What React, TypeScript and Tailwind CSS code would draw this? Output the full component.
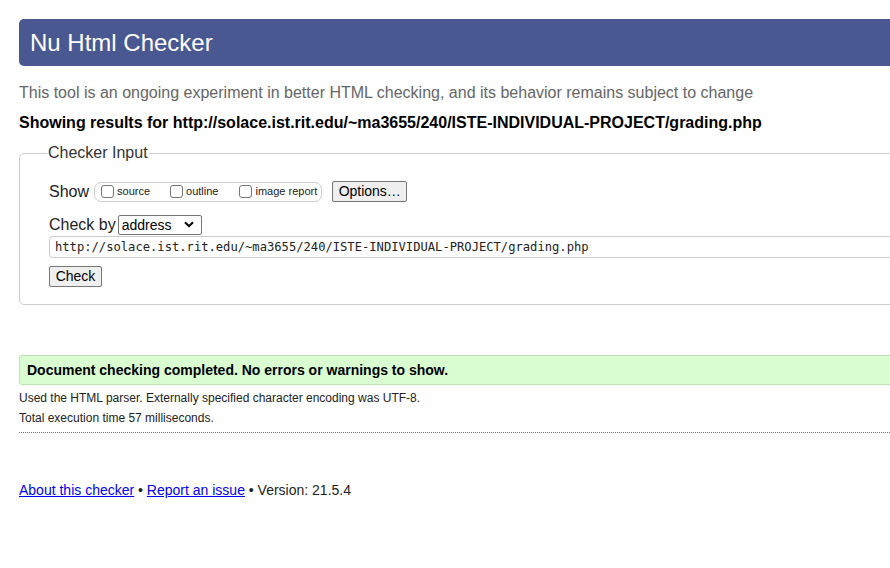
import React from "react";

function Box({ label, className = "" }: { label: string; className?: string }) {
  return (
    <span className={"flex items-center " + className}>
      <span className="inline-block w-[13px] h-[13px] border border-[#767676] rounded-[3px] bg-white" />
      <span className="ml-[3px] text-[11px] leading-[13px] text-[#222]">{label}</span>
    </span>
  );
}

export default function App() {
  return (
    <div className="w-full overflow-hidden bg-white" style={{ fontFamily: '"Liberation Sans", Arial, sans-serif' }}>
      <div className="w-[1100px] pt-[19px] pl-[19px] pb-[60px]">
        <h1 className="h-[47px] bg-[#4a5892] rounded-l-[5px] pl-[11px] text-[24px] leading-[47px] text-white font-normal">
          Nu Html Checker
        </h1>
        <p className="mt-[18px] text-[16px] leading-[18px] text-[#666]">
          This tool is an ongoing experiment in better HTML checking, and its behavior remains subject to change
        </p>
        <p className="mt-[12px] text-[16px] leading-[18px] font-bold text-black">
          Showing results for http://solace.ist.rit.edu/~ma3655/240/ISTE-INDIVIDUAL-PROJECT/grading.php
        </p>

        <fieldset className="mt-[12px] border border-[#ccc] rounded-[5px] pl-[29px] pt-[19px] pb-[16px]">
          <legend className="text-[16px] leading-[18px] text-[#333] ml-[-2px] px-[1px]">Checker Input</legend>

          <div className="flex items-center h-[21px]">
            <span className="text-[16px] text-[#222]">Show</span>
            <div className="ml-[5px] flex items-center h-[20px] border border-[#ccc] rounded-[7px] pl-[6px] pr-[4px]">
              <Box label="source" />
              <Box label="outline" className="ml-[20px]" />
              <Box label="image report" className="ml-[21px]" />
            </div>
            <button className="ml-[10px] w-[75px] h-[21px] bg-[#efefef] border border-[#767676] rounded-[2px] text-[14px] leading-[19px] text-black">
              Options…
            </button>
          </div>

          <div className="mt-[12px] flex items-center h-[21px]">
            <span className="text-[16px] text-[#222]">Check by</span>
            <div className="ml-[2px] w-[84px] h-[20px] border border-[#767676] rounded-[2px] flex items-center justify-between pl-[3px] pr-[7px] bg-white">
              <span className="text-[14px] leading-[18px] text-black">address</span>
              <svg width="10" height="7" viewBox="0 0 10 7">
                <path d="M1 1.2 L5 5.2 L9 1.2" fill="none" stroke="#000" strokeWidth="2" />
              </svg>
            </div>
          </div>

          <div className="mt-[1px] h-[22px] border border-[#ccc] rounded-[4px] pl-[5px] flex items-center bg-white">
            <span className="text-[12.15px] leading-[16px] text-[#222]" style={{ fontFamily: '"DejaVu Sans Mono", monospace' }}>
              http://solace.ist.rit.edu/~ma3655/240/ISTE-INDIVIDUAL-PROJECT/grading.php
            </span>
          </div>

          <button className="mt-[8px] w-[53px] h-[21px] bg-[#efefef] border border-[#767676] rounded-[2px] text-[14px] leading-[19px] text-black">
            Check
          </button>
        </fieldset>

        <div className="mt-[50px] h-[30px] bg-[#d9fcd0] border border-[#bde3b3] rounded-[3px] pl-[7px] flex items-center">
          <span className="text-[14px] font-bold text-black">Document checking completed. No errors or warnings to show.</span>
        </div>

        <div className="border-b border-dotted border-[#777] pb-[4px] mt-[3px]">
          <p className="text-[12px] leading-[20px] text-[#222]">Used the HTML parser. Externally specified character encoding was UTF-8.</p>
          <p className="text-[12px] leading-[20px] text-[#222]">Total execution time 57 milliseconds.</p>
        </div>

        <p className="mt-[47px] text-[14px] leading-[20px] text-[#222]">
          <a href="#" className="text-[#0000ee] underline">About this checker</a>
          {" • "}
          <a href="#" className="text-[#0000ee] underline">Report an issue</a>
          {" • Version: 21.5.4"}
        </p>
      </div>
    </div>
  );
}
